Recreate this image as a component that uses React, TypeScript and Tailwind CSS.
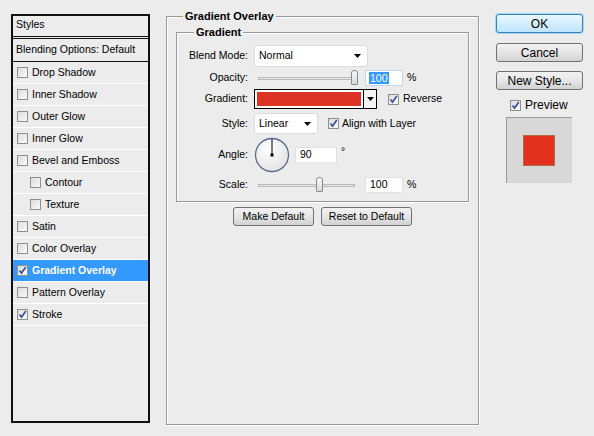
import React from "react";

const font = { fontFamily: '"Liberation Sans", Arial, sans-serif' };

function Check({ checked = false }: { checked?: boolean }) {
  return (
    <span className="relative inline-block w-[11px] h-[11px] shrink-0 border border-[#8e8f8f] bg-gradient-to-br from-[#dcdcdc] to-[#fbfbfb]">
      {checked && (
        <svg viewBox="0 0 11 11" className="absolute -left-px -top-px w-[11px] h-[11px]">
          <path d="M2.5 5.5 L4.5 8 L8.8 2" fill="none" stroke="#3d4f9a" strokeWidth="1.7" />
        </svg>
      )}
    </span>
  );
}

function StyleRow({
  label,
  checked = false,
  indent = false,
  active = false,
}: {
  label: string;
  checked?: boolean;
  indent?: boolean;
  active?: boolean;
}) {
  return (
    <div
      className={`h-[22px] flex items-center gap-[4px] border-b border-white ${
        indent ? "pl-[17px]" : "pl-[4px]"
      } ${active ? "bg-[#3399ff] text-white font-bold" : "text-black"}`}
    >
      <Check checked={checked} />
      <span className="leading-none">{label}</span>
    </div>
  );
}

function Arrow() {
  return (
    <svg viewBox="0 0 7 4" className="w-[7px] h-[4px]">
      <path d="M0 0 H7 L3.5 4 Z" fill="#000" />
    </svg>
  );
}

function Slider({ pos }: { pos: number }) {
  return (
    <div className="relative w-[107px] h-[16px]">
      <div className="absolute left-[4px] right-[6px] top-[7px] h-[3px] border border-[#b9b9b9] bg-[#e6e6e6]" />
      <div
        className="absolute top-0 w-[7px] h-[15px] rounded-t-[3px] rounded-b-[1px] border border-[#8a8a8a] bg-gradient-to-b from-[#fafafa] to-[#d8d8d8]"
        style={{ left: pos }}
      />
    </div>
  );
}

function Label({ children }: { children: React.ReactNode }) {
  return <div className="w-[72px] pr-[1px] text-right shrink-0">{children}</div>;
}

function Btn({ children, w, primary = false }: { children: React.ReactNode; w: string; primary?: boolean }) {
  return (
    <div
      className={`${w} h-[19px] rounded-[3px] flex items-center justify-center text-black ${
        primary
          ? "border border-[#3c7fb1] bg-gradient-to-b from-[#eaf6fd] to-[#bee6fd] shadow-[0_0_0_1px_#9fd8f8]"
          : "border border-[#707070] bg-gradient-to-b from-[#f2f2f2] via-[#e6e6e6] to-[#d2d2d2]"
      }`}
    >
      {children}
    </div>
  );
}

export default function App() {
  return (
    <div className="w-[594px] h-[436px] bg-[#ececec] flex items-start text-[10.5px] text-black" style={font}>
      {/* styles list */}
      <div className="ml-[11px] mt-[14px] w-[139px] h-[409px] border-2 border-[#111] bg-[#ececec]">
        <div className="h-[21px] pl-[3px] pb-[2px] flex items-center border-b border-[#111]">Styles</div>
        <div className="h-[24px] pl-[3px] flex items-center border-t border-[#111] border-b mt-[1px]">
          Blending Options: Default
        </div>
        <StyleRow label="Drop Shadow" />
        <StyleRow label="Inner Shadow" />
        <StyleRow label="Outer Glow" />
        <StyleRow label="Inner Glow" />
        <StyleRow label="Bevel and Emboss" />
        <StyleRow label="Contour" indent />
        <StyleRow label="Texture" indent />
        <StyleRow label="Satin" />
        <StyleRow label="Color Overlay" />
        <StyleRow label="Gradient Overlay" checked active />
        <StyleRow label="Pattern Overlay" />
        <StyleRow label="Stroke" checked />
      </div>

      {/* gradient overlay group */}
      <div className="relative ml-[16px] mt-[16px] w-[313px] h-[409px] border border-[#999] shadow-[1px_1px_0_#fff,inset_1px_1px_0_#fff]">
        <span className="absolute left-[16px] -top-[7px] px-[2px] bg-[#ececec] font-bold text-[11px] leading-[13px]">
          Gradient Overlay
        </span>
        <div className="relative ml-[9px] mt-[15px] w-[293px] h-[170px] border border-[#999] shadow-[1px_1px_0_#fff,inset_1px_1px_0_#fff] pt-[12px]">
          <span className="absolute left-[17px] -top-[7px] px-[2px] bg-[#ececec] font-bold text-[11px] leading-[13px]">
            Gradient
          </span>
          <div className="flex flex-col">
            <div className="h-[22px] flex items-center gap-[5px]">
              <Label>Blend Mode:</Label>
              <div className="w-[114px] h-[22px] rounded-[3px] border border-[#dcdcdc] bg-white flex items-center justify-between pl-[4px] pr-[6px]">
                <span>Normal</span>
                <Arrow />
              </div>
            </div>
            <div className="mt-[2px] h-[17px] flex items-center gap-[5px]">
              <Label>Opacity:</Label>
              <Slider pos={97} />
              <div className="ml-[-1px] w-[38px] h-[16px] border border-[#c2d6ea] bg-white flex items-center pl-[3px]">
                <span className="bg-[#3399ff] text-white px-[1px] leading-[12px]">100</span>
              </div>
              <span className="-ml-[1px]">%</span>
            </div>
            <div className="mt-[3px] h-[20px] flex items-center gap-[5px]">
              <Label>Gradient:</Label>
              <div className="w-[123px] h-[20px] border border-black flex bg-white">
                <div className="flex-1 m-[2px] bg-[#dd3326]" />
                <div className="w-[13px] border-l border-black flex items-center justify-center bg-[#f4f4f4]">
                  <Arrow />
                </div>
              </div>
              <div className="ml-[6px] flex items-center gap-[4px]">
                <Check checked />
                <span>Reverse</span>
              </div>
            </div>
            <div className="mt-[4px] h-[21px] flex items-center gap-[5px]">
              <Label>Style:</Label>
              <div className="w-[64px] h-[21px] rounded-[3px] border border-[#dcdcdc] bg-white flex items-center justify-between pl-[4px] pr-[6px]">
                <span>Linear</span>
                <Arrow />
              </div>
              <div className="ml-[5px] flex items-center gap-[3px]">
                <Check checked />
                <span>Align with Layer</span>
              </div>
            </div>
            <div className="mt-[3px] h-[36px] flex items-center gap-[5px]">
              <Label>Angle:</Label>
              <svg viewBox="0 0 36 36" className="w-[36px] h-[36px] shrink-0">
                <defs>
                  <radialGradient id="dial" cx="40%" cy="35%" r="70%">
                    <stop offset="0%" stopColor="#ffffff" />
                    <stop offset="100%" stopColor="#e2e2e2" />
                  </radialGradient>
                </defs>
                <circle cx="18" cy="18" r="16.5" fill="url(#dial)" stroke="#5a6a8c" strokeWidth="1.3" />
                <line x1="18" y1="2" x2="18" y2="18" stroke="#000" strokeWidth="1" />
                <rect x="16.5" y="16.5" width="3" height="3" fill="#000" />
              </svg>
              <div className="w-[42px] h-[16px] border border-[#e0e0e0] bg-white flex items-center pl-[4px]">90</div>
              <span className="-ml-[1px] -mt-[8px] text-[10px]">°</span>
            </div>
            <div className="mt-[3px] h-[17px] flex items-center gap-[5px]">
              <Label>Scale:</Label>
              <Slider pos={62} />
              <div className="ml-[-1px] w-[38px] h-[16px] border border-[#e0e0e0] bg-white flex items-center pl-[4px]">100</div>
              <span className="-ml-[1px]">%</span>
            </div>
          </div>
        </div>
        <div className="mt-[5px] ml-[66px] flex gap-[7px]">
          <Btn w="w-[81px]">Make Default</Btn>
          <Btn w="w-[91px]">Reset to Default</Btn>
        </div>
      </div>

      {/* right column */}
      <div className="ml-[17px] mt-[14px] w-[87px] flex flex-col items-stretch text-[12px]">
        <Btn w="w-[87px]" primary>
          OK
        </Btn>
        <div className="mt-[10px]">
          <Btn w="w-[87px]">Cancel</Btn>
        </div>
        <div className="mt-[9px]">
          <Btn w="w-[87px]">New Style...</Btn>
        </div>
        <div className="mt-[9px] ml-[14px] flex items-center gap-[4px] h-[12px]">
          <Check checked />
          <span>Preview</span>
        </div>
        <div className="mt-[6px] ml-[10px] w-[66px] h-[66px] bg-[#d8d8d8] border-l border-t border-[#9a9a9a] pl-[16px] pt-[17px]">
          <div className="w-[32px] h-[31px] bg-[#e2321f] border border-[#b06a45]" />
        </div>
      </div>
    </div>
  );
}
